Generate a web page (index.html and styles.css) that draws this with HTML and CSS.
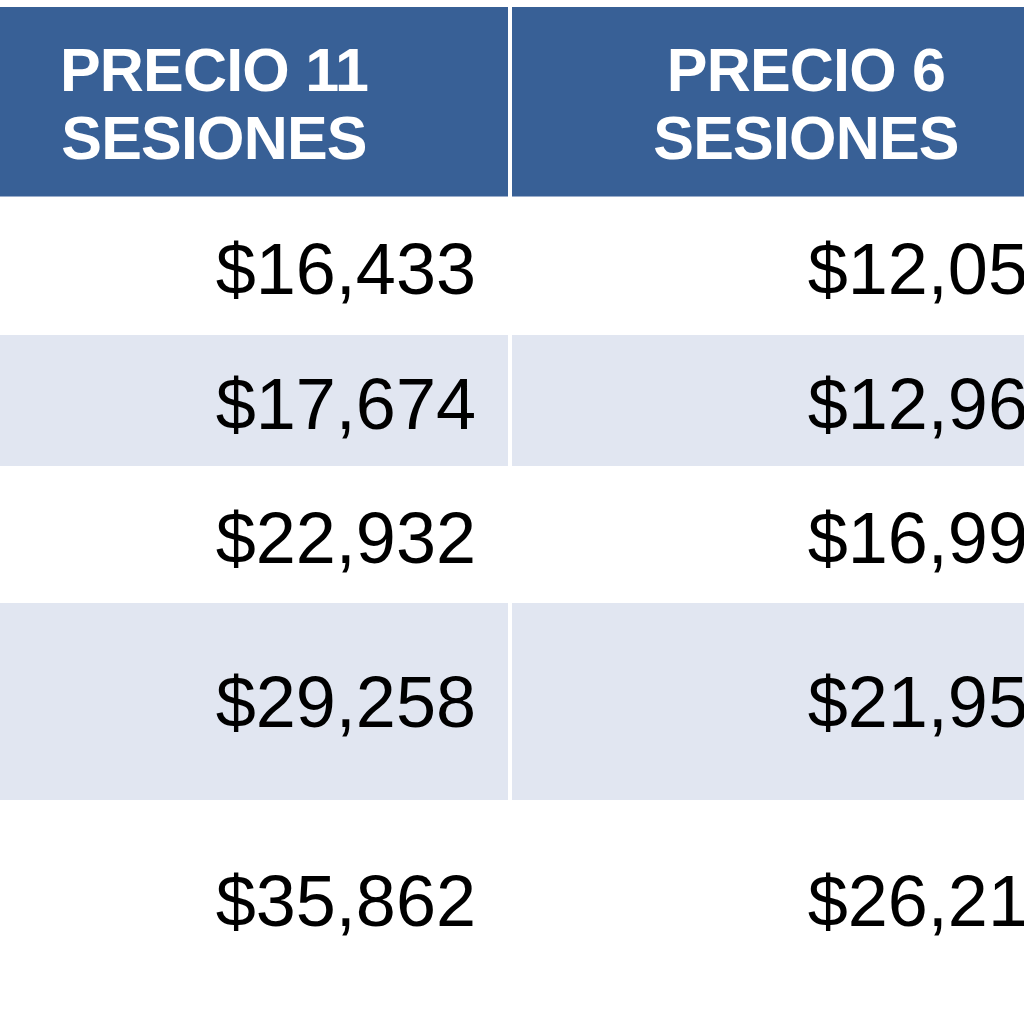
FILE: index.html
```html
<!DOCTYPE html>
<html lang="es">
<head>
<meta charset="utf-8">
<title>Precios</title>
<link rel="stylesheet" href="styles.css">
</head>
<body>
<div class="frame">
  <table class="prices">
    <thead>
      <tr class="head">
        <th>PRECIO 11<br>SESIONES</th>
        <th>PRECIO 6<br>SESIONES</th>
      </tr>
    </thead>
    <tbody>
      <tr class="r1"><td>$16,433</td><td>$12,059</td></tr>
      <tr class="r2 alt"><td>$17,674</td><td>$12,969</td></tr>
      <tr class="r3"><td>$22,932</td><td>$16,999</td></tr>
      <tr class="r4 alt"><td>$29,258</td><td>$21,959</td></tr>
      <tr class="r5"><td>$35,862</td><td>$26,219</td></tr>
    </tbody>
  </table>
</div>
</body>
</html>
```
FILE: styles.css
```css
html, body {
  margin: 0;
  padding: 0;
  background: #ffffff;
}
.frame {
  width: 1024px;
  height: 1024px;
  overflow: hidden;
  padding-top: 7px;
  box-sizing: border-box;
}
.prices {
  width: 1188px;
  margin-left: -84px;
  border-collapse: separate;
  border-spacing: 4px 0;
  table-layout: fixed;
  font-family: "Liberation Sans", Arial, sans-serif;
}
.prices th,
.prices td {
  width: 588px;
  padding: 0;
  box-sizing: border-box;
}
.head th {
  height: 190px;
  padding-top: 4px;
  background: #386096;
  color: #ffffff;
  font-weight: bold;
  font-size: 61px;
  letter-spacing: -0.8px;
  line-height: 68px;
  text-align: center;
  vertical-align: middle;
  border-bottom: 1px solid #9aadcb;
}
.prices td {
  font-size: 72px;
  color: #000000;
  text-align: right;
  padding-right: 32px;
  vertical-align: middle;
  line-height: 1;
}
.alt td {
  background: #e1e6f1;
}
.r1 td { height: 138px; padding-top: 6px; }
.r2 td { height: 131px; padding-top: 6px; }
.r3 td { height: 137px; padding-top: 6px; }
.r4 td { height: 197px; }
.r5 td { height: 202px; }
```
